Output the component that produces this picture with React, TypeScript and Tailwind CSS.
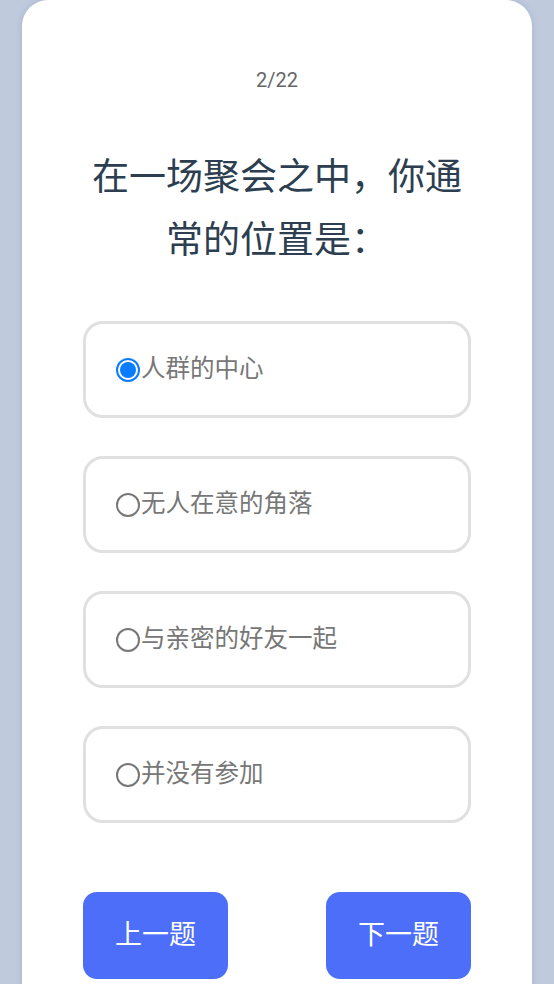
import React, { useState } from "react";

const options = ["人群的中心", "无人在意的角落", "与亲密的好友一起", "并没有参加"];

export default function App() {
  const [selected, setSelected] = useState(0);

  return (
    <div
      className="min-h-screen w-full bg-[#bfcadd] px-[22px] overflow-hidden"
      style={{ fontFamily: 'Roboto, "Noto Sans CJK SC", sans-serif' }}
    >
      <div className="min-h-[1010px] rounded-t-[26px] bg-white shadow-[0_0_6px_rgba(90,110,150,0.25)] pt-[66px] flex flex-col items-center">
        {/* 进度 */}
        <div className="text-[20px] leading-[28px] text-[#666]">2/22</div>

        {/* 题目 */}
        <h1 className="mt-[52px] w-[388px] text-center text-[37px] leading-[63px] text-[#2c3e50] font-normal">
          在一场聚会之中，你通常的位置是：
        </h1>

        {/* 选项 */}
        <div className="mt-[49px] flex w-[388px] flex-col gap-[38px]">
          {options.map((opt, i) => (
            <label
              key={opt}
              onClick={() => setSelected(i)}
              className="flex h-[97px] cursor-pointer items-center rounded-[20px] border-[3px] border-[#e0e0e0] pl-[30px] text-[24.5px] text-[#777]"
            >
              {selected === i ? (
                <span className="flex h-[24px] w-[24px] shrink-0 items-center justify-center rounded-full border-2 border-[#0a7cff]">
                  <span className="h-[16px] w-[16px] rounded-full bg-[#0a7cff]" />
                </span>
              ) : (
                <span className="h-[24px] w-[24px] shrink-0 rounded-full border-2 border-[#777]" />
              )}
              <span className="ml-px">{opt}</span>
            </label>
          ))}
        </div>

        {/* 底部按钮 */}
        <div className="mt-[69px] flex w-[388px] justify-between">
          <button className="h-[87px] w-[145px] rounded-[14px] bg-[#4c6ef8] text-[27px] text-white">
            上一题
          </button>
          <button className="h-[87px] w-[145px] rounded-[14px] bg-[#4c6ef8] text-[27px] text-white">
            下一题
          </button>
        </div>
      </div>
    </div>
  );
}
